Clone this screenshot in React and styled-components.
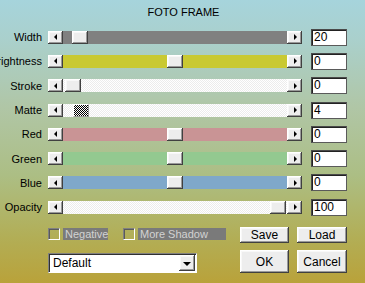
import styled, { createGlobalStyle, css } from "styled-components";

const Global = createGlobalStyle`
  html, body {
    margin: 0;
    padding: 0;
  }
  body {
    font-family: "Liberation Sans", Arial, sans-serif;
  }
`;

const raised = css`
  background: #ededed;
  box-shadow:
    inset -1px -1px #404040,
    inset 1px 1px #ffffff,
    inset -2px -2px #9a9a9a,
    inset 2px 2px #f8f8f8;
`;

const dither = `repeating-conic-gradient(#ffffff 0 25%, #ececec 0 50%) 0 0 / 2px 2px`;

const Page = styled.div`
  width: 365px;
  height: 283px;
  overflow: hidden;
  box-sizing: border-box;
  padding-top: 6px;
  font-size: 11px;
  color: #000;
  background: linear-gradient(
    180deg,
    #a6d4dc 0%,
    #aad0cc 14%,
    #b0c6a6 38%,
    #acbe84 62%,
    #b2ae56 84%,
    #b9a23a 100%
  );
`;

const Title = styled.div`
  text-align: center;
  height: 13px;
  line-height: 13px;
  margin-left: 2px;
`;

const Rows = styled.div`
  display: flex;
  flex-direction: column;
  margin-top: 6px;
`;

const Row = styled.div`
  display: flex;
  align-items: center;
  height: 24.3px;
`;

const Label = styled.div`
  width: 42px;
  margin-right: 6px;
  display: flex;
  justify-content: flex-end;
  white-space: nowrap;
`;

const ScrollBar = styled.div`
  display: flex;
  width: 254px;
  height: 13px;
`;

const ArrowButton = styled.div`
  ${raised};
  width: 15px;
  height: 13px;
  display: flex;
  align-items: center;
  justify-content: center;
  &::before {
    content: "";
    width: 0;
    height: 0;
    border-top: 3px solid transparent;
    border-bottom: 3px solid transparent;
    ${(p) =>
      p.$dir === "left"
        ? "border-right: 3px solid #000; margin-right: 1px;"
        : "border-left: 3px solid #000; margin-left: 1px;"}
  }
`;

const Track = styled.div`
  flex: 1;
  position: relative;
  background: ${(p) => p.$color || dither};
`;

const Thumb = styled.div`
  position: absolute;
  top: 0;
  width: 16px;
  height: 13px;
  ${(p) =>
    p.$checker
      ? css`
          box-sizing: border-box;
          border: 1px solid #9a9a9a;
          border-top-color: #fff;
          border-left-color: #fff;
          background: repeating-conic-gradient(#000 0 25%, #fff 0 50%) 0 0 / 2px 2px;
        `
      : raised}
`;

const ValueInput = styled.div`
  box-sizing: border-box;
  margin-left: 9px;
  width: 36px;
  height: 17px;
  background: #fff;
  border: 1px solid #4a4a4a;
  border-right-color: #5a5a5a;
  border-bottom-color: #5a5a5a;
  box-shadow: inset 1px 1px #222;
  padding-left: 2px;
  font-size: 12px;
  line-height: 15px;
`;

const Bottom = styled.div`
  display: flex;
  padding-left: 48px;
  margin-top: 8px;
`;

const LeftCol = styled.div`
  width: 192px;
  display: flex;
  flex-direction: column;
`;

const CheckRow = styled.div`
  display: flex;
  align-items: center;
  height: 14px;
`;

const CheckBox = styled.div`
  box-sizing: border-box;
  width: 12px;
  height: 12px;
  border: 1px solid #ffffff;
  border-top-color: #808080;
  border-left-color: #808080;
  box-shadow: inset 1px 1px #5a5a5a;
  margin-right: 3px;
  margin-left: ${(p) => p.$gap || 0}px;
`;

const CheckLabel = styled.div`
  box-sizing: border-box;
  width: ${(p) => p.$width}px;
  height: 12px;
  line-height: 12px;
  padding-left: 2px;
  background: #7a7a7a;
  color: #d2d2d2;
  white-space: nowrap;
`;

const Select = styled.div`
  box-sizing: border-box;
  margin-top: 12px;
  width: 149px;
  height: 20px;
  background: #fff;
  border: 1px solid #fff;
  border-top-color: #808080;
  border-left-color: #808080;
  box-shadow: inset 1px 1px #303030;
  display: flex;
  align-items: center;
  justify-content: space-between;
  padding-left: 4px;
  padding-right: 1px;
  font-size: 12px;
`;

const SelectButton = styled.div`
  ${raised};
  width: 16px;
  height: 16px;
  display: flex;
  align-items: center;
  justify-content: center;
  &::before {
    content: "";
    border-left: 4px solid transparent;
    border-right: 4px solid transparent;
    border-top: 4px solid #000;
    margin-top: 1px;
  }
`;

const ButtonGrid = styled.div`
  display: grid;
  grid-template-columns: 49px 50px;
  grid-template-rows: 16px 23px;
  column-gap: 8px;
  row-gap: 7px;
`;

const Button = styled.div`
  ${raised};
  display: flex;
  align-items: center;
  justify-content: center;
  font-size: 12px;
`;

const rows = [
  { label: "Width", color: "#808080", thumb: 9, value: "20" },
  { label: "Brightness", color: "#c9c932", thumb: 104, value: "0" },
  { label: "Stroke", thumb: 2, value: "0" },
  { label: "Matte", thumb: 10, value: "4", checker: true },
  { label: "Red", color: "#c99495", thumb: 104, value: "0" },
  { label: "Green", color: "#93c990", thumb: 104, value: "0" },
  { label: "Blue", color: "#7fa8ca", thumb: 104, value: "0" },
  { label: "Opacity", thumb: 207, value: "100" },
];

export default function App() {
  return (
    <Page>
      <Global />
      <Title>FOTO FRAME</Title>
      <Rows>
        {rows.map((r) => (
          <Row key={r.label}>
            <Label>{r.label}</Label>
            <ScrollBar>
              <ArrowButton $dir="left" />
              <Track $color={r.color}>
                <Thumb $checker={r.checker} style={{ left: r.thumb }} />
              </Track>
              <ArrowButton $dir="right" />
            </ScrollBar>
            <ValueInput>{r.value}</ValueInput>
          </Row>
        ))}
      </Rows>
      <Bottom>
        <LeftCol>
          <CheckRow>
            <CheckBox />
            <CheckLabel $width={45}>Negative</CheckLabel>
            <CheckBox $gap={15} />
            <CheckLabel $width={88}>More Shadow</CheckLabel>
          </CheckRow>
          <Select>
            <span>Default</span>
            <SelectButton />
          </Select>
        </LeftCol>
        <ButtonGrid>
          <Button>Save</Button>
          <Button>Load</Button>
          <Button>OK</Button>
          <Button>Cancel</Button>
        </ButtonGrid>
      </Bottom>
    </Page>
  );
}
